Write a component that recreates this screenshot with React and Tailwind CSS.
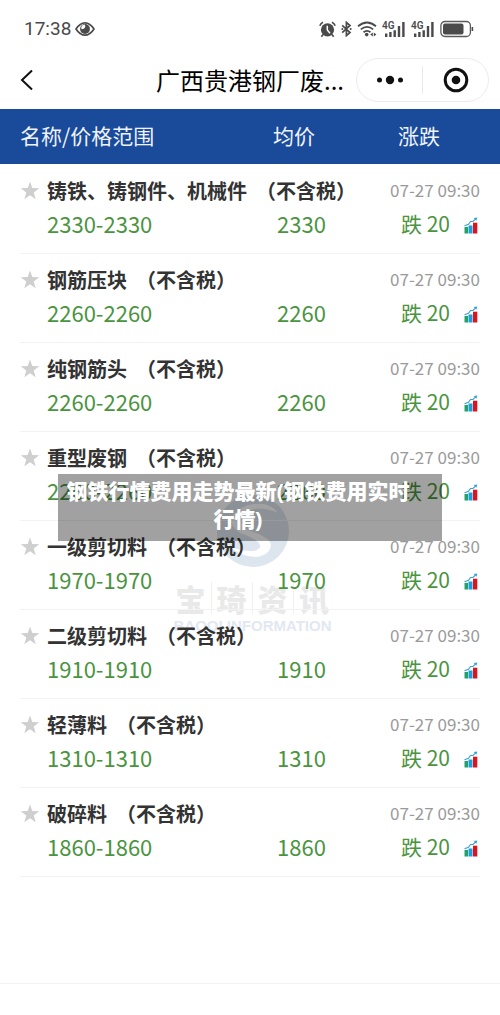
const rows = [
  ["铸铁、铸钢件、机械件", "2330"],
  ["钢筋压块", "2260"],
  ["纯钢筋头", "2260"],
  ["重型废钢", "2260"],
  ["一级剪切料", "1970"],
  ["二级剪切料", "1910"],
  ["轻薄料", "1310"],
  ["破碎料", "1860"],
];

function Eye() {
  return (
    <svg viewBox="0 0 20 16" className="h-4 w-5" aria-hidden="true">
      <path d="M1 8Q5 1.8 10 1.8T19 8Q15 14.2 10 14.2T1 8Z" fill="none" stroke="#4a4a4a" strokeWidth="1.7" />
      <circle cx="10" cy="8" r="4.9" fill="#4a4a4a" />
      <path d="M9.6 3.6a2.7 2.7 0 0 1-3.4 4.1a4 4 0 0 1 3.4-4.1Z" fill="#fff" />
    </svg>
  );
}

function Alarm() {
  return (
    <svg viewBox="0 0 17 17" className="h-[17px] w-[17px]" aria-hidden="true">
      <circle cx="8.5" cy="8.8" r="6.6" fill="#4a4a4a" />
      <path d="M.8 4.8Q1.6 2.4 4 1.2M16.2 4.8Q15.4 2.4 13 1.2M4 13.5L2.4 15.8M13 13.5l1.600 2.300" stroke="#4a4a4a" strokeWidth="1.6" fill="none" />
      <path d="M8.300 4.800V9l2.700 3.200" stroke="#fff" strokeWidth="1.500" fill="none" />
    </svg>
  );
}

function Bluetooth() {
  return (
    <svg viewBox="0 0 11 16" className="h-4 w-[11px]" aria-hidden="true">
      <path d="M1.200 4.400L9 11.500L5.400 14.600V1.400L9 4.500L1.200 11.600" stroke="#4a4a4a" strokeWidth="1.700" fill="none" />
      <circle cx="1.300" cy="8" r="1" fill="#4a4a4a" />
      <circle cx="9.700" cy="8" r="1" fill="#4a4a4a" />
    </svg>
  );
}

function Wifi() {
  return (
    <svg viewBox="0 0 20 16" className="h-4 w-5" aria-hidden="true">
      <path d="M1 5.300Q10-2.300 19 5.300M3.800 8.400Q10 3.400 16.200 8.400M6.500 11.200Q10 8.500 13.500 11.200" stroke="#4a4a4a" strokeWidth="1.800" fill="none" />
      <circle cx="9.700" cy="13.600" r="1.800" fill="#4a4a4a" />
      <path d="M15.800 11.600v4L13.200 13.600ZM16.800 11.600v4L19.400 13.600Z" fill="#4a4a4a" />
    </svg>
  );
}

function Signal() {
  return (
    <svg viewBox="0 0 24 17" className="h-[17px] w-6" role="img" aria-label="4G">
      <text x="0" y="8" fontSize="10" fontWeight="600" fontFamily="Roboto, sans-serif" fill="#4a4a4a">4G</text>
      <path d="M3 12.500h2.400v3.500H3ZM7.200 11h2.400v5H7.200ZM11.500 9.200h2.400V16h-2.400ZM15.800 5h2.400v11h-2.400ZM20.200 1h2.400v15h-2.400Z" fill="#4a4a4a" />
    </svg>
  );
}

function Battery() {
  return (
    <svg viewBox="0 0 34 18" className="h-[18px] w-[34px]" aria-hidden="true">
      <rect x=".9" y="1.500" width="29.500" height="15" rx="4" fill="none" stroke="#5a5a5a" strokeWidth="1.300" />
      <rect x="3" y="3.500" width="20.500" height="11" rx="2" fill="#4a4a4a" />
      <path d="M31.600 7h1.600v4h-1.600Z" fill="#4a4a4a" />
    </svg>
  );
}

function Star() {
  return (
    <svg viewBox="0 0 20 19" className="h-[19px] w-5" aria-hidden="true">
      <path d="M10 .5l2.300 6.600 7 .1-5.600 4.300 2 6.800-5.700-4-5.700 4 2-6.800L.7 7.200l7-.1Z" fill="#cfcfcf" />
    </svg>
  );
}

function ChartIcon() {
  return (
    <svg viewBox="0 0 14 17" className="h-[17px] w-[14px]" aria-hidden="true">
      <path d="M.5 10h3.500v6.500H.5Z" fill="#23a06b" />
      <path d="M4.500 8.500h4v8h-4Z" fill="#1ba0dc" />
      <path d="M9 5.700h4.300v10.800H9Z" fill="#dc1420" />
      <path d="M.5 8.800L4.500 7.300L6.500 4.500H9L12 1.700" fill="none" stroke="#35a3d6" strokeWidth="1.100" />
      <path d="M9.600 1l3.700-.5-.9 3.300Z" fill="#35a3d6" />
    </svg>
  );
}

function Watermark() {
  return (
    <div aria-hidden="true" className="pointer-events-none absolute inset-x-0 top-[385px] flex flex-col items-center pl-[5px]">
      <svg viewBox="0 0 74 74" className="h-[74px] w-[74px]">
        <circle cx="37" cy="37" r="36" fill="#dde6ee" />
        <path d="M62 19Q42 10 29 19Q19 29 34 37Q54 43 55 51Q54 61 40 63Q24 63 9 49Q22 58 38 57Q48 54 42 48Q36 43 24 39Q12 32 17 21Q28 8 48 10Q57 12 62 19Z" fill="#fff" />
      </svg>
      <div className="mt-[10px] flex h-10 items-center text-[30px] font-black text-[#e9e9ea]">
        {["宝", "琦", "资", "讯"].map((c) => (
          <span key={c} className="w-[41px] border-r border-[#f0f0f0] text-center leading-8 last:border-0">{c}</span>
        ))}
      </div>
      <div className="font-['Liberation_Sans',sans-serif] text-[15px] leading-4 font-bold text-[#e2e8f1]">BAOQI INFORMATION</div>
    </div>
  );
}

export default function App() {
  return (
    <div className="flex min-h-screen flex-col bg-white font-['Noto_Sans_CJK_SC',sans-serif] text-[#333]">
      <header>
        <div className="flex h-[54px] items-center justify-between pt-1 pr-[26px] pl-6">
          <div className="flex items-center gap-1 font-[Roboto,sans-serif] text-[19px] text-[#4a4a4a]">
            <span>17:38</span>
            <Eye />
          </div>
          <div className="flex items-center gap-[5px]">
            <Alarm />
            <Bluetooth />
            <Wifi />
            <Signal />
            <Signal />
            <Battery />
          </div>
        </div>
        <div className="flex h-[55px] items-center pr-[11px] pb-[3px] pl-5">
          <button type="button" aria-label="返回" className="flex h-8 w-8 items-center">
            <svg viewBox="0 0 14 22" className="h-[22px] w-[14px]" aria-hidden="true">
              <path d="M12 1.500L2 11l10 9.500" fill="none" stroke="#111" strokeWidth="2" />
            </svg>
          </button>
          <h1 className="min-w-0 flex-1 pr-3 text-right text-[24px] leading-8 text-black">广西贵港钢厂废...</h1>
          <div className="flex h-11 w-[133px] items-center rounded-full border border-[#ececec]">
            <button type="button" aria-label="更多" className="flex h-full flex-1 items-center justify-center">
              <svg viewBox="0 0 28 10" className="h-[10px] w-7" aria-hidden="true">
                <circle cx="3.500" cy="5" r="2.500" fill="#111" />
                <circle cx="14" cy="5" r="4.200" fill="#111" />
                <circle cx="24.500" cy="5" r="2.500" fill="#111" />
              </svg>
            </button>
            <span className="h-[26px] w-px bg-[#e8e8e8]" />
            <button type="button" aria-label="关闭" className="flex h-full flex-1 items-center justify-center">
              <svg viewBox="0 0 26 26" className="h-[26px] w-[26px]" aria-hidden="true">
                <circle cx="13" cy="13" r="10.800" fill="none" stroke="#111" strokeWidth="3" />
                <circle cx="13" cy="13" r="4.300" fill="#111" />
              </svg>
            </button>
          </div>
        </div>
      </header>

      <main className="relative flex-1">
        <Watermark />
        <div className="relative bg-[linear-gradient(#1a4a9a,#1a4a9a)] bg-[length:100%_55px] bg-no-repeat px-5">
          <table className="w-full table-fixed border-collapse">
            <colgroup>
              <col className="w-[27px]" />
              <col />
              <col className="w-[107px]" />
              <col className="w-[100px]" />
            </colgroup>
            <thead>
              <tr className="h-[55px] text-left text-[21px] text-[#eef3fb]">
                <th colSpan={2} className="p-0 pb-[2px] font-normal">名称/价格范围</th>
                <th className="p-0 pb-[2px] font-normal">均价</th>
                <th className="p-0 pb-[2px] pl-[18px] font-normal">涨跌</th>
              </tr>
            </thead>
            {rows.map(([name, price]) => (
              <tbody key={name} className="border-b border-[#f2f2f2]">
                <tr className="h-[44px]">
                  <td className="p-0 pt-2">
                    <button type="button" aria-label={"收藏" + name} className="block">
                      <Star />
                    </button>
                  </td>
                  <th scope="rowgroup" colSpan={2} className="p-0 pt-[10px] text-left text-[20px] leading-7 font-bold whitespace-nowrap">
                    {name}&nbsp; （不含税）
                  </th>
                  <td className="p-0 pt-2 text-right text-[17px] leading-7 whitespace-nowrap text-[#9a9a9a]">07-27 09:30</td>
                </tr>
                <tr className="h-[45px] align-top text-[22px] leading-[30px] text-[#4a9440]">
                  <td className="p-0" />
                  <td className="p-0">{price}-{price}</td>
                  <td className="p-0 pl-1">{price}</td>
                  <td className="p-0">
                    <div className="flex items-center justify-end gap-[14px] pr-[2px]">
                      <span className="text-[21px] whitespace-nowrap">跌 20</span>
                      <span className="pt-1"><ChartIcon /></span>
                    </div>
                  </td>
                </tr>
              </tbody>
            ))}
          </table>
        </div>
        <div className="absolute inset-x-[58px] top-[365px] bg-black/37 pr-6 text-center font-['Liberation_Sans','Noto_Sans_CJK_SC',sans-serif] text-[21px] leading-7 font-black text-white">
          <p className="pt-1 pb-[7px]">钢铁行情费用走势最新(钢铁费用实时行情)</p>
        </div>
      </main>
      <footer className="h-8 border-t border-[#f2f2f2]" />
    </div>
  );
}
